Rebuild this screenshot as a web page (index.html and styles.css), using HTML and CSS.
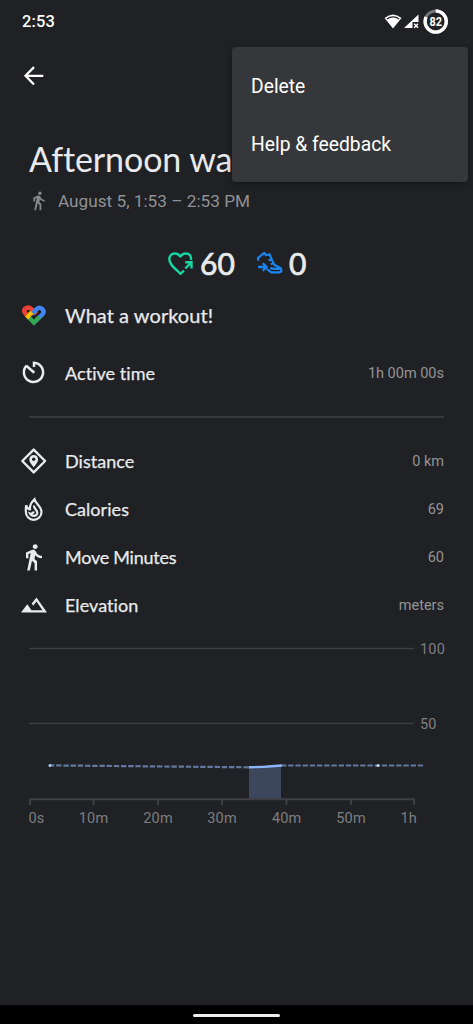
FILE: index.html
```
<!DOCTYPE html>
<html lang="en">
<head>
<meta charset="utf-8">
<title>Afternoon walk</title>
<link rel="stylesheet" href="styles.css">
</head>
<body>
<div class="screen">
  <header class="status">
    <span class="clock">2:53</span>
    <svg class="status-icons" width="68" height="28" viewBox="0 0 68 28">
      <path d="M4.500 10Q13 3 21.500 10L13 20.500Z" fill="#fff"/>
      <path d="M6.800 11Q13 6.800 19.200 11" fill="none" stroke="#202124" stroke-width="1.200"/>
      <path d="M24 20L38.500 6.500V14H32.500V20Z" fill="#fff"/>
      <path d="M34.200 15.800L38 19.800M38 15.800L34.200 19.800" stroke="#fff" stroke-width="1.400"/>
      <circle cx="55.700" cy="13.500" r="10.600" fill="none" stroke="#737477" stroke-width="3"/>
      <circle cx="55.700" cy="13.500" r="10.600" fill="none" stroke="#fff" stroke-width="3.400" pathLength="100" stroke-dasharray="82 18" transform="rotate(-90 55.700 13.500)"/>
      <text x="55.700" y="17.700" text-anchor="middle" textLength="12.500" lengthAdjust="spacingAndGlyphs" class="battery">82</text>
    </svg>
  </header>
  <nav class="appbar">
    <svg width="24" height="24" viewBox="0 0 24 24"><path d="M22.300 11.800H4.800M13 3.100L4.500 11.800L13 20.500" fill="none" stroke="#fff" stroke-width="2.300"/></svg>
  </nav>
  <h1 class="title">Afternoon walk</h1>
  <div class="date">
    <svg width="21" height="21" viewBox="0 0 24 24"><path fill="#87888b" d="M12.500 4.500c1.100 0 2-.9 2-2s-.9-2-2-2-2 .9-2 2 .9 2 2 2zM8.800 7.900L6 22h2.100l1.800-8 2.100 2v6h2v-7.500l-2.100-2 .6-3C13.800 11 15.800 12 18 12v-2c-1.900 0-3.500-1-4.300-2.400l-1-1.600c-.4-.6-1-1-1.700-1-.3 0-.5.1-.8.1L5 7.300V12h2V8.600l1.800-.7"/></svg>
    <span>August 5, 1:53 – 2:53 PM</span>
  </div>
  <div class="scores">
    <svg width="28" height="26" viewBox="0 0 28 26">
      <path d="M24 9C24.500 4.500 22 2.500 19 2.500C16.800 2.500 14.800 3.500 13.300 5.400C11.800 3.500 9.800 2.500 7.800 2.500C4.300 2.500 2.300 5.100 2.300 8.300C2.300 13.300 7.300 16.800 13.500 22.800L17 19.500" fill="none" stroke="#17d6a0" stroke-width="2.400" stroke-linejoin="round"/>
      <path d="M18.300 17.500L24 11.700M18.300 11.200H24.500V17.500" fill="none" stroke="#17d6a0" stroke-width="2.400"/>
    </svg>
    <span class="score move">60</span>
    <svg width="28" height="26" viewBox="0 0 28 26">
      <path d="M2.500 9.800L1.900 7.200L8.200 1.800L10.200 4.200L13.600 3.400L16.200 9.600L18.200 13.800L24.700 17.300Q26.500 21 23.500 21.400H15.200L10.800 18M16 7.900L12.700 9.600M18 11.600L14.900 13.300M14.200 17Q17 18.300 24 17.700" fill="none" stroke="#1a86f2" stroke-width="2.200" stroke-linejoin="round"/>
      <path d="M2 16H10M6.800 12.200L10.600 16L6.800 19.800" fill="none" stroke="#1a86f2" stroke-width="2.300"/>
    </svg>
    <span class="score">0</span>
  </div>
  <div class="row workout">
    <svg class="icon" width="36" height="32" viewBox="0 0 36 32">
      <path d="M15.200 15.300L20.400 10.300Q23.500 7.500 26.300 10Q28.800 12.700 26.300 15.500L20 21.600" fill="none" stroke="#4285f4" stroke-width="4.300"/>
      <path d="M11.500 16.500L9.500 14.500Q7.200 11.500 9.600 9.500Q12.300 7.400 15 9.600L20.300 14.900" fill="none" stroke="#ea4335" stroke-width="4.300"/>
      <path d="M10.500 18.900L13.500 15.900L18 20.400L22 16.500L25.100 19.600L18 26.700Z" fill="#34a853"/>
      <path d="M10.500 18.900L8.800 17.200L15.600 10.400L18.700 13.500L12 20.400Z" fill="#fbbc04"/>
      <path d="M10.500 16L8.300 13.500Q7 10 10 9Q12.500 7.700 14.800 9.500L18.700 13.300" fill="none" stroke="#ea4335" stroke-width="3.600"/>
      <path d="M16.800 14.200L20.800 10.300" stroke="#4285f4" stroke-width="4"/>
    </svg>
    <span>What a workout!</span>
  </div>
  <div class="row active">
    <svg class="icon" width="36" height="32" viewBox="0 0 36 32"><path d="M10.600 8.600A9.600 9.600 0 1 0 18 5.700V10M10.300 8.700L18.300 15.800" fill="none" stroke="#e8eaed" stroke-width="2.500"/></svg>
    <span>Active time</span><span class="value">1h 00m 00s</span>
  </div>
  <hr class="divider">
  <div class="row">
    <svg class="icon" width="36" height="32" viewBox="0 0 36 32"><path d="M17.700 4.600L29.100 16L17.700 27.400L6.300 16Z" fill="none" stroke="#e8eaed" stroke-width="2.400" stroke-linejoin="round"/><path d="M17.700 22.300C15 18.800 13.300 16.600 13.300 14.400A4.400 4.400 0 0 1 22.100 14.400C22.100 16.600 20.400 18.800 17.700 22.300Z" fill="#e8eaed"/><circle cx="17.700" cy="14.300" r="1.700" fill="#202124"/></svg>
    <span>Distance</span><span class="value">0 km</span>
  </div>
  <div class="row">
    <svg class="icon" width="36" height="32" viewBox="0 0 36 32"><g fill="none" stroke="#e8eaed" stroke-width="2.200"><path d="M18.500 6.200C19.500 11 25.500 13 25.500 19A7.800 7.800 0 0 1 9.900 19C9.700 16 9.800 14 10.200 12.300C11 15.200 12 16.500 14 16.300C13.500 12 15.500 9 18.500 6.200Z"/><path d="M18 12.500C17.800 16 21.800 17.200 21.300 20.300C20.500 23.800 15.500 23.500 14 20.500C15.500 21 17.500 20.200 17.800 18.500"/></g></svg>
    <span>Calories</span><span class="value">69</span>
  </div>
  <div class="row">
    <svg class="icon" width="36" height="32" viewBox="0 0 36 32"><path fill="#e8eaed" transform="translate(2.600 1.300) scale(1.230)" d="M13.500 5.500c1.100 0 2-.9 2-2s-.9-2-2-2-2 .9-2 2 .9 2 2 2zM9.800 8.900L7 23h2.100l1.800-8 2.100 2v6h2v-7.500l-2.100-2 .6-3C14.800 12 16.800 13 19 13v-2c-1.900 0-3.500-1-4.300-2.400l-1-1.600c-.4-.6-1-1-1.700-1-.3 0-.5.1-.8.1L6 8.300V13h2V9.600l1.800-.7"/></svg>
    <span class="tight">Move Minutes</span><span class="value">60</span>
  </div>
  <div class="row">
    <svg class="icon" width="36" height="32" viewBox="0 0 36 32"><path d="M5 23.500L11.300 15.300L15.500 21.200H26.500L20.500 12.500L17.200 16.800L15.700 14.500L20.500 8.500L31 23.500Z" fill="#e8eaed"/></svg>
    <span>Elevation</span><span class="value">meters</span>
  </div>
  <svg class="chart" width="473" height="200" viewBox="0 630 473 200">
    <path d="M29 648.500H414M29 723.500H414" stroke="#3d3e41" stroke-width="1.300"/>
    <path d="M249 767L281 765.500V799H249Z" fill="#3c475b"/>
    <path d="M29 799.300H415M30 799V805M93.500 799V805M158 799V805M222 799V805M286.500 799V805M351 799V805M414 799V805" stroke="#3e3f42" stroke-width="2"/>
    <path d="M49 765.400L249 767.300M281 765.500H423" stroke="#62789f" stroke-width="2.200" stroke-dasharray="5.400 1.800"/>
    <path d="M249 767.300L265 766.800L282 765.500" stroke="#8ab4f8" stroke-width="2.400" fill="none"/>
    <circle cx="50" cy="765.500" r="1.500" fill="#a9c8fa"/><circle cx="378" cy="765.500" r="1.500" fill="#c0d6fa"/>
    <g class="axis"><text x="420" y="654">100</text><text x="420" y="729">50</text>
    <text x="28.500" y="823">0s</text><g text-anchor="middle"><text x="93.500" y="823">10m</text><text x="158" y="823">20m</text><text x="222" y="823">30m</text><text x="286.700" y="823">40m</text><text x="351" y="823">50m</text></g><text x="400.500" y="823">1h</text></g>
  </svg>
  <footer class="navbar"><div class="handle"></div></footer>
  <div class="menu"><div class="item">Delete</div><div class="item">Help &amp; feedback</div></div>
</div>
</body>
</html>
```
FILE: styles.css
```
* { box-sizing: border-box; }
body { margin: 0; background: #202124; font-family: Roboto, sans-serif; }
.screen { position: relative; width: 473px; height: 1024px; display: flex; flex-direction: column; background: #202124; color: #e8eaed; overflow: hidden; }
.status { height: 44px; display: flex; justify-content: space-between; padding: 7.500px 25px 0 22px; flex: none; }
.clock { font: 500 16.500px/28px Roboto, sans-serif; letter-spacing: 0.150px; color: #fff; }
.battery { font: 700 12px Roboto, sans-serif; fill: #fff; }
.appbar { height: 64px; padding: 20px 0 0 21px; flex: none; }
.appbar svg { display: block; }
.title { margin: 31px 0 0 29px; font: 400 34px/40px Lato, sans-serif; letter-spacing: -0.100px; white-space: nowrap; }
.date { height: 24px; margin: 10px 0 0 29px; display: flex; align-items: center; gap: 8px; font-size: 17.200px; color: #909194; white-space: nowrap; }
.scores { height: 40px; margin: 31px 0 0 167px; display: flex; align-items: center; flex: none; }
.score { font: 400 30px/38px Lato, sans-serif; margin-left: 5px; padding-bottom: 2px; -webkit-text-stroke: 0.700px #e8eaed; }
.move { width: 56px; }
.row { height: 48px; padding: 0 29px 0 16px; display: flex; align-items: center; flex: none; font: 400 18px/24px Lato, sans-serif; -webkit-text-stroke: 0.250px #e8eaed; letter-spacing: 0.050px; }
.icon { margin-right: 13px; flex: none; }
.tight { letter-spacing: -0.250px; }
.workout { margin-top: 7px; font-size: 20px; }
.row > span:not(.value) { padding-bottom: 1px; }
.active { margin-top: 10px; }
.value { margin-left: auto; font: 400 14.500px/20px Roboto, sans-serif; color: #939497; -webkit-text-stroke: 0; letter-spacing: 0; padding-top: 2px; }
.divider { width: 415px; height: 2px; border: 0; background: #36373a; margin: 19px 0 19px 29px; flex: none; }
.chart { display: block; flex: none; margin-top: 1px; }
.axis { font: 400 14.500px Roboto, sans-serif; fill: #7d7e81; letter-spacing: 0.200px; }
.navbar { height: 19px; margin-top: auto; background: #000; display: flex; justify-content: center; padding-top: 9px; flex: none; }
.handle { width: 87px; height: 3px; border-radius: 1.500px; background: #eee; }
.menu { position: absolute; left: 232px; top: 47px; width: 236px; height: 135px; padding: 11px 0; border-radius: 4px; background: #36373a; box-shadow: 0 2px 6px #0005; }
.item { height: 58px; padding-left: 19px; font: 400 19.300px/58px Roboto, sans-serif; color: #fff; }
```
